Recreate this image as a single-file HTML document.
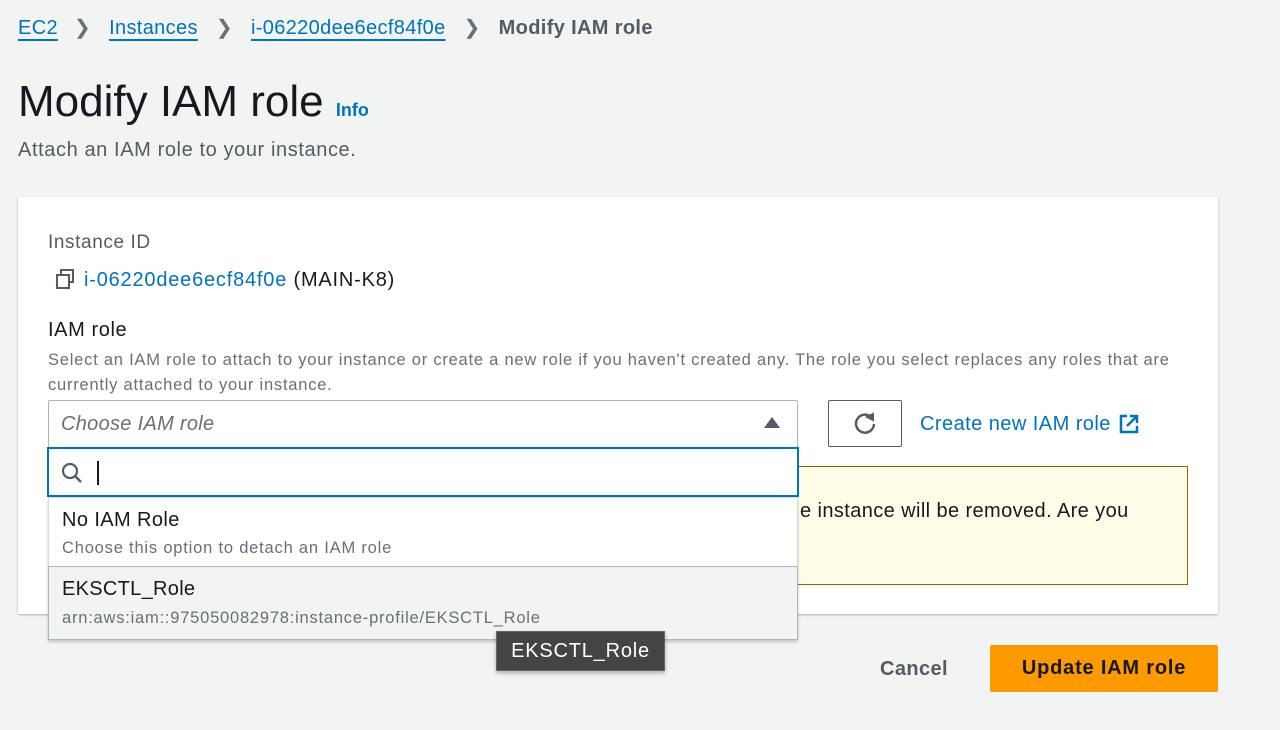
<!DOCTYPE html>
<html><head><meta charset="utf-8"><style>
*{box-sizing:border-box;margin:0;padding:0}
body{width:1280px;height:730px;background:#f2f3f3;font-family:"Liberation Sans",sans-serif;position:relative;overflow:hidden;color:#16191f}
.a{position:absolute;white-space:nowrap}
.lnk{color:#0073bb}
.u{text-decoration:underline;text-underline-offset:5px}
</style></head><body>
<div class="a" style="left:18px;top:15px;font-size:20px;letter-spacing:0.35px">
<span class="lnk u">EC2</span><span style="color:#687078;margin:0 18px 0 16px">&#x276F;</span><span class="lnk u">Instances</span><span style="color:#687078;margin:0 18px">&#x276F;</span><span class="lnk u">i-06220dee6ecf84f0e</span><span style="color:#687078;margin:0 18px">&#x276F;</span><span style="color:#545b64;font-weight:bold">Modify IAM role</span></div>
<div class="a" style="left:18px;top:77px;font-size:44px;letter-spacing:0px">Modify IAM role <span class="lnk" style="font-size:18px;font-weight:bold;letter-spacing:0">Info</span></div>
<div class="a" style="left:18px;top:139px;font-size:20px;color:#545b64;letter-spacing:0.6px">Attach an IAM role to your instance.</div>
<div class="a" style="left:18px;top:197px;width:1200px;height:417px;background:#fff;box-shadow:0 1px 2px rgba(0,28,36,.3)"></div>
<div class="a" style="left:48px;top:232px;font-size:19px;color:#545b64;letter-spacing:0.6px">Instance ID</div>
<svg class="a" style="left:55px;top:268px" width="22" height="22" viewBox="0 0 22 22"><rect x="6" y="2" width="12" height="12" fill="none" stroke="#545b64" stroke-width="2"/><rect x="2" y="7" width="12" height="13" fill="#fff" stroke="#545b64" stroke-width="2"/></svg>
<div class="a" style="left:84px;top:269px;font-size:20px;letter-spacing:0.8px"><span class="lnk">i-06220dee6ecf84f0e</span> (MAIN-K8)</div>
<div class="a" style="left:48px;top:319px;font-size:20px;letter-spacing:0.6px">IAM role</div>
<div class="a" style="left:48px;top:348px;font-size:16.5px;color:#687078;line-height:25px;letter-spacing:0.77px">Select an IAM role to attach to your instance or create a new role if you haven't created any. The role you select replaces any roles that are<br>currently attached to your instance.</div>
<div class="a" style="left:797px;top:466px;width:391px;height:119px;background:#fffce7;border:1px solid #8d6605"></div>
<div class="a" style="left:800px;top:500px;font-size:20px;letter-spacing:0.4px">e instance will be removed. Are you</div>
<div class="a" style="left:48px;top:400px;width:750px;height:48px;background:#fff;border:1px solid #aab7b8;border-radius:2px"></div>
<div class="a" style="left:61px;top:413px;font-size:20px;font-style:italic;color:#687078;letter-spacing:0.3px">Choose IAM role</div>
<div class="a" style="left:764px;top:417px;width:0;height:0;border-left:8px solid transparent;border-right:8px solid transparent;border-bottom:11px solid #545b64"></div>
<div class="a" style="left:828px;top:400px;width:74px;height:47px;background:#fff;border:1px solid #545b64;border-radius:2px"></div>
<svg class="a" style="left:852px;top:411px" width="26" height="26" viewBox="0 0 26 26"><path d="M20 7A9 9 0 1 0 22 13" fill="none" stroke="#545b64" stroke-width="2.5"/><path d="M15 6L21 3L21 9Z" fill="#545b64" stroke="#545b64" stroke-width="2"/></svg>
<div class="a lnk" style="left:920px;top:413px;font-size:20px;letter-spacing:0.45px">Create new IAM role</div>
<svg class="a" style="left:1118px;top:413px" width="22" height="22" viewBox="0 0 22 22"><path d="M9 3H3V19H19V13" fill="none" stroke="#0073bb" stroke-width="2.5"/><path d="M12 3H19V10M19 3L9 13" fill="none" stroke="#0073bb" stroke-width="2.5"/></svg>
<div class="a" style="left:47px;top:447px;width:752px;height:50px;background:#fff;border:2px solid #0073bb"></div>
<svg class="a" style="left:60px;top:461px" width="24" height="24" viewBox="0 0 24 24"><circle cx="10" cy="10" r="7" fill="none" stroke="#545b64" stroke-width="2.2"/><path d="M15 15L21 21" stroke="#545b64" stroke-width="2.4"/></svg>
<div class="a" style="left:97px;top:461px;width:2px;height:24px;background:#16191f"></div>
<div class="a" style="left:48px;top:497px;width:750px;height:143px;background:#fff;border:1px solid #d5dbdb;box-shadow:0 2px 3px rgba(0,0,0,.2)"></div>
<div class="a" style="left:62px;top:509px;font-size:20px;letter-spacing:0.4px">No IAM Role</div>
<div class="a" style="left:62px;top:539px;font-size:16.5px;color:#687078;letter-spacing:0.8px">Choose this option to detach an IAM role</div>
<div class="a" style="left:48px;top:566px;width:750px;height:74px;background:#f2f3f3;border:1px solid #aab7b8"></div>
<div class="a" style="left:62px;top:578px;font-size:20px;letter-spacing:0.3px">EKSCTL_Role</div>
<div class="a" style="left:62px;top:609px;font-size:16.5px;color:#687078;letter-spacing:0.78px">arn:aws:iam::975050082978:instance-profile/EKSCTL_Role</div>
<div class="a" style="left:496px;top:631px;width:169px;height:40px;background:#444;border:1px solid #666;box-shadow:0 2px 4px rgba(0,0,0,.3);color:#fff;font-size:20px;line-height:38px;text-align:center;letter-spacing:0.8px">EKSCTL_Role</div>
<div class="a" style="left:880px;top:658px;font-size:20px;font-weight:bold;color:#545b64;letter-spacing:0.4px">Cancel</div>
<div class="a" style="left:990px;top:645px;width:228px;height:47px;background:#ff9900;border-radius:2px;font-size:20px;font-weight:bold;line-height:47px;text-align:center;letter-spacing:0.8px">Update IAM role</div>
</body></html>
